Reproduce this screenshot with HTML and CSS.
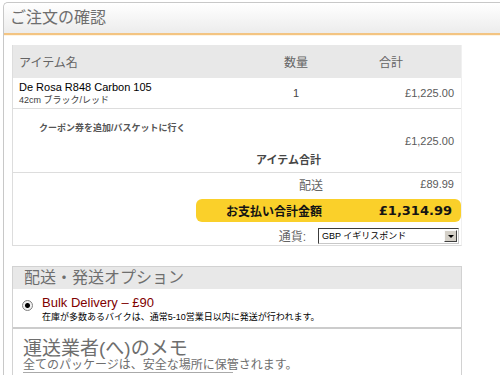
FILE: index.html
```html
<!DOCTYPE html>
<html lang="ja">
<head>
    <meta charset="UTF-8" />
    <title>ご注文の確認</title>
    <link rel="stylesheet" href="styles.css">
</head>
<body>
    <div class="panel">
        <h1 class="panel-head">ご注文の確認</h1>
        <div class="panel-body">
            <!-- basket summary -->
            <section class="cart">
                <div class="cart-head">
                    <span class="col-name">アイテム名</span>
                    <span class="col-qty">数量</span>
                    <span class="col-total">合計</span>
                </div>
                <div class="cart-row">
                    <div class="col-name">
                        <div class="item-name">De Rosa R848 Carbon 105</div>
                        <div class="item-opt">42cm ブラック/レッド</div>
                    </div>
                    <span class="col-qty">1</span>
                    <span class="col-price">£1,225.00</span>
                </div>
                <div class="subtotal">
                    <a class="coupon">クーポン券を追加/バスケットに行く</a>
                    <div class="price-line">£1,225.00</div>
                    <div class="subtotal-label">アイテム合計</div>
                </div>
                <div class="delivery">
                    <div class="delivery-line">
                        <span class="delivery-label">配送</span>
                        <span class="col-price">£89.99</span>
                    </div>
                    <div class="grand-total">
                        <span>お支払い合計金額</span>
                        <strong>£1,314.99</strong>
                    </div>
                    <div class="currency">
                        <label>通貨:</label>
                        <div class="fake-select">
                            <span>GBP イギリスポンド</span>
                            <span class="arrow"></span>
                        </div>
                    </div>
                </div>
            </section>

            <!-- shipping -->
            <section class="shipping">
                <h2 class="shipping-head">配送・発送オプション</h2>
                <div class="option">
                    <span class="radio"></span>
                    <div>
                        <div class="option-name">Bulk Delivery – £90</div>
                        <div class="option-desc">在庫が多数あるバイクは、通常5-10営業日以内に発送が行われます。</div>
                    </div>
                </div>
                <div class="notes">
                    <h3>運送業者(へ)のメモ</h3>
                    <p>全てのパッケージは、安全な場所に保管されます。</p>
                    <textarea></textarea>
                </div>
            </section>
        </div>
    </div>
</body>
</html>
```

FILE: styles.css
```css
body {
    margin: 0;
    background-color: rgb(255, 255, 255);
    font-family: "Liberation Sans", "Noto Sans CJK JP", sans-serif;
    overflow: hidden;
}
.panel {
    margin: 2px 0 0 3px;
    border-left: 1px solid rgb(200, 200, 200);
    border-top: 1px solid rgb(200, 200, 200);
    border-top-left-radius: 5px;
    height: 372px;
    overflow: hidden;
}
.panel-head {
    margin: 0;
    height: 30px;
    line-height: 30px;
    padding-left: 6px;
    font-size: 16px;
    font-weight: normal;
    color: rgb(110, 110, 110);
    background: linear-gradient(rgb(255, 255, 255), rgb(236, 236, 236));
    border-top-left-radius: 5px;
    border-bottom: 2px solid rgb(243, 196, 130);
    box-shadow: 0 1px 0 rgb(255, 244, 226);
}
.panel-body {
    padding: 10px 0 0 8px;
}
.cart {
    width: 448px;
    border: 1px solid rgb(221, 221, 221);
    border-top: none;
    border-right-color: rgb(240, 240, 240);
}
.cart-head, .cart-row {
    display: flex;
    align-items: center;
}
.cart-head {
    height: 33px;
    background: rgb(232, 232, 232);
    font-size: 12px;
    color: rgb(100, 100, 100);
}
.col-name {
    width: 232px;
    padding-left: 6px;
}
.col-qty {
    width: 90px;
    text-align: center;
}
.col-total {
    width: 100px;
    text-align: center;
}
.col-price {
    margin-left: auto;
    padding-right: 7px;
    font-size: 11px;
    color: rgb(90, 90, 90);
}
.cart-row {
    height: 30px;
    border-bottom: 1px solid rgb(221, 221, 221);
}
.cart-row .col-qty {
    font-size: 11px;
    color: rgb(70, 70, 70);
}
.item-name {
    font-size: 11px;
    color: rgb(0, 0, 0);
    line-height: 13px;
}
.item-opt {
    font-size: 9px;
    color: rgb(60, 60, 60);
    line-height: 12px;
}
.subtotal {
    height: 63px;
    border-bottom: 1px solid rgb(221, 221, 221);
}
.coupon {
    display: block;
    padding: 12px 0 0 26px;
    font-size: 9px;
    font-weight: bold;
    color: rgb(85, 85, 85);
}
.price-line {
    text-align: right;
    padding: 1px 7px 0 0;
    font-size: 11px;
    color: rgb(90, 90, 90);
}
.subtotal-label {
    padding: 4px 0 0 243px;
    font-size: 11px;
    font-weight: bold;
    color: rgb(70, 70, 70);
}
.delivery {
    padding: 3px 0 1px;
}
.delivery-line {
    display: flex;
    align-items: center;
    height: 16px;
}
.delivery-label {
    padding-left: 286px;
    font-size: 12px;
    color: rgb(100, 100, 100);
}
.grand-total {
    margin: 7px 0 0 183px;
    height: 23px;
    background: rgb(250, 208, 42);
    border-radius: 6px;
    display: flex;
    align-items: center;
    justify-content: space-between;
    padding: 0 9px 0 30px;
}
.grand-total span {
    font-size: 12px;
    font-weight: bold;
    color: rgb(20, 20, 20);
}
.grand-total strong {
    font-family: "DejaVu Sans", sans-serif;
    font-size: 13px;
    color: rgb(20, 20, 20);
}
.currency {
    display: flex;
    align-items: center;
    justify-content: flex-end;
    gap: 12px;
    margin-top: 5px;
    padding-right: 2px;
}
.currency label {
    font-size: 12px;
    color: rgb(100, 100, 100);
}
.fake-select {
    width: 136px;
    height: 14px;
    border: 1px solid rgb(60, 60, 60);
    border-right-color: rgb(200, 200, 200);
    border-bottom-color: rgb(200, 200, 200);
    display: flex;
    align-items: center;
    justify-content: space-between;
    font-size: 9px;
    padding-left: 3px;
}
.arrow {
    width: 13px;
    height: 12px;
    margin-right: 1px;
    background: rgb(212, 208, 200);
    border: 1px solid rgb(250, 250, 250);
    border-right-color: rgb(64, 64, 64);
    border-bottom-color: rgb(64, 64, 64);
    box-sizing: border-box;
    position: relative;
}
.arrow::after {
    content: "";
    position: absolute;
    left: 3px;
    top: 4px;
    border: 3px solid transparent;
    border-top: 3px solid rgb(0, 0, 0);
}
.shipping {
    margin-top: 20px;
    width: 448px;
    border: 1px solid rgb(210, 210, 210);
    border-bottom: none;
}
.shipping-head {
    margin: 0;
    height: 22px;
    line-height: 22px;
    padding-left: 11px;
    background: rgb(232, 232, 232);
    font-size: 16px;
    font-weight: normal;
    color: rgb(110, 110, 110);
}
.option {
    display: flex;
    gap: 9px;
    padding: 6px 0 0 9px;
    height: 32px;
    border-bottom: 2px solid rgb(204, 204, 204);
}
.radio {
    width: 9px;
    height: 9px;
    margin-top: 5px;
    border: 1px solid rgb(128, 128, 128);
    border-radius: 50%;
    background: radial-gradient(circle, rgb(0, 0, 0) 2px, rgb(240, 240, 240) 3px);
}
.option-name {
    font-size: 13px;
    color: rgb(128, 0, 0);
    line-height: 15px;
}
.option-desc {
    font-size: 9px;
    color: rgb(0, 0, 0);
    line-height: 14px;
}
.notes {
    padding: 9px 0 0 10px;
}
.notes h3 {
    margin: 0;
    font-size: 19px;
    font-weight: normal;
    line-height: 21px;
    color: rgb(110, 110, 110);
}
.notes p {
    margin: 0;
    font-size: 12px;
    line-height: 13px;
    color: rgb(110, 110, 110);
    border-bottom: 1px solid rgb(170, 170, 170);
    width: 210px;
    white-space: nowrap;
}
.notes textarea {
    display: block;
    margin-top: 2px;
    width: 210px;
    height: 40px;
    border: 1px solid rgb(60, 60, 60);
}
```
